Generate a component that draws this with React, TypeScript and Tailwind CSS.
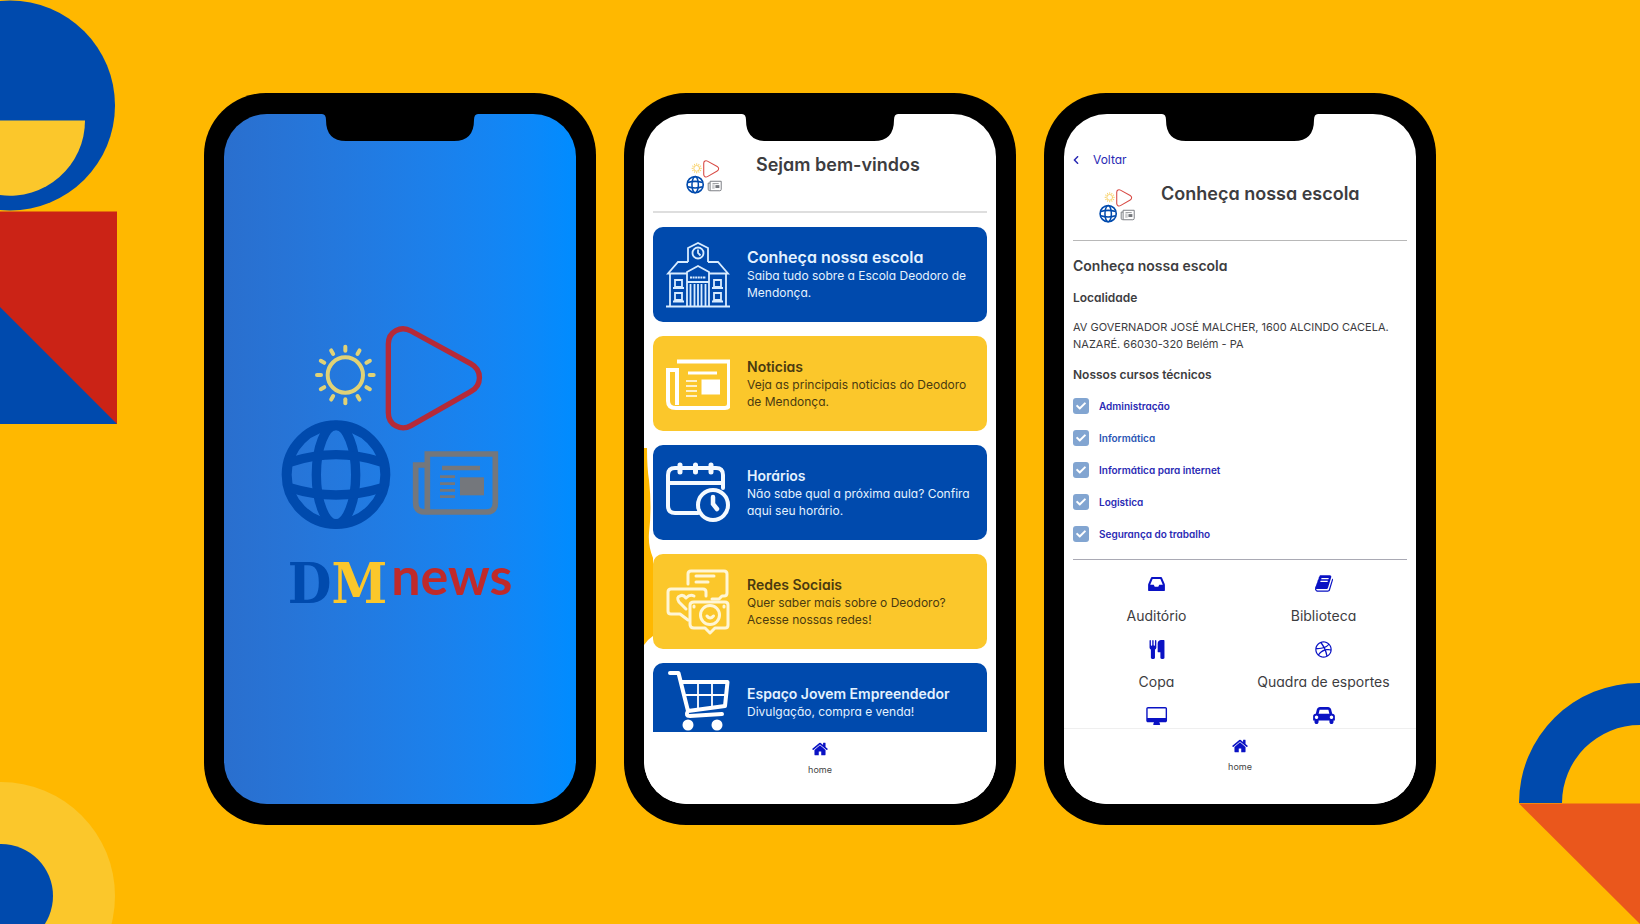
import React from "react";
import { FaCheck, FaChevronLeft, FaDribbble } from "react-icons/fa";

function LogoMark({ className, bold = true }: { className: string; bold?: boolean }) {
  const rays = [0, 30, 60, 90, 120, 150, 180, 210, 240, 270, 300, 330];
  return (
    <svg viewBox="60 70 660 620" className={className} fill="none" aria-hidden="true">
      <g stroke={bold ? "#e0d276" : "#f8d066"} strokeWidth={bold ? 12 : 18} strokeLinecap="round">
        <circle cx="256" cy="223" r="53" />
        {rays.map((a) => (
          <path key={a} d="M256 138v12" transform={`rotate(${a} 256 223)`} />
        ))}
      </g>
      <path
        d="M385 130C385 92 423 74 453 91L632 189C667 208 667 254 632 273L453 375C423 392 385 373 385 336Z"
        stroke={bold ? "#b52a38" : "#d84a44"}
        strokeWidth={bold ? 16 : 20}
      />
      <g stroke="#004aad">
        <circle cx="228" cy="522" r="148" strokeWidth="30" />
        <ellipse cx="228" cy="522" rx="59" ry="148" strokeWidth="28" />
        <path d="M92 484Q228 440 364 484M92 562Q228 604 364 562" strokeWidth="28" />
      </g>
      <g stroke="#74777c">
        <path d="M502 460H706V606Q706 634 680 634H502ZM502 493H467V606Q467 634 496 634" strokeWidth="17" />
        <path d="M546 502H660" strokeWidth="13" />
        <path d="M540 528H585M540 549H585M540 569H585M540 588H585" strokeWidth="8" />
        <rect x="600" y="530" width="72" height="54" fill="#74777c" stroke="none" />
      </g>
    </svg>
  );
}

function SchoolIcon() {
  return (
    <svg viewBox="0 0 64 66" className="w-16 shrink-0" fill="none" stroke="#d8ecff" strokeWidth="1.8" aria-hidden="true">
      <path d="M22 20V6L32 1L42 6V20" />
      <circle cx="32" cy="11" r="5.5" />
      <path d="M32 7.500V11L34.500 13.500M22 20H12L2 31.500H21M42 20H52L62 31.500H43M4 32V64M60 32V64M21 64V30L32 24L43 30V64M21 40H43M24.500 64V42M28.500 64V42M32 64V42M35.500 64V42M39.500 64V42M0 64.500H64" />
      <path d="M24 35.500H40" strokeWidth="2" strokeDasharray="2 .6" />
      <path d="M9 38H16V45H9ZM7 46H18M9 51H16V58H9ZM7 59.500H18M48 38H55V45H48ZM46 46H57M48 51H55V58H48ZM46 59.500H57" />
    </svg>
  );
}

function NewspaperIcon() {
  return (
    <svg viewBox="0 0 64 66" className="w-16 shrink-0" fill="none" stroke="#fff" strokeWidth="4" aria-hidden="true">
      <path d="M11 10.500H63V53Q63 57 59 57H10Q2 57 2 50V19H11V54" />
      <path d="M22 22H51" strokeWidth="3" />
      <path d="M20 30H31M20 35H31M20 40H31M20 45H31" strokeWidth="1.600" />
      <path d="M35.500 28.500H54V43.500H35.500Z" fill="#fff" stroke="none" />
    </svg>
  );
}

function ScheduleIcon() {
  return (
    <svg viewBox="0 0 64 66" className="w-16 shrink-0" fill="none" stroke="#f4faff" strokeWidth="4" strokeLinecap="round" aria-hidden="true">
      <path d="M32 53H9Q2 53 2 46V15Q2 8 9 8H50Q57 8 57 15V28M2 23H57" />
      <path d="M14 5V12M29.500 5V12M45 5V12" strokeWidth="5" />
      <circle cx="47" cy="45" r="15" />
      <path d="M47 37V44L51 49" strokeWidth="4.500" />
    </svg>
  );
}

function SocialIcon() {
  return (
    <svg viewBox="0 0 64 66" className="w-16 shrink-0" fill="none" stroke="#fff6d5" strokeWidth="3" strokeLinejoin="round" strokeLinecap="round" aria-hidden="true">
      <path d="M22 15V5Q22 2 25 2H58Q61 2 61 5V24Q61 27 58 27H56L53 30H46M30 7H48M30 13H42" />
      <path d="M40 27V23Q40 20 37 20H5Q2 20 2 23V42Q2 45 5 45H14L22 51" />
      <path d="M20 40L13 33Q10 28 14 27Q17 25 20 29Q24 25 28 27" />
      <path d="M28 33H59Q62 33 62 36V56Q62 59 59 59H49L44 64L39 59H28Q24 59 24 55V36Q24 33 28 33Z" />
      <circle cx="44" cy="46" r="9.500" />
      <path d="M41 47Q44 51 47.500 47M28 37V38M58 37V38" />
    </svg>
  );
}

function CartIcon() {
  return (
    <svg viewBox="0 0 64 66" className="w-16 shrink-0" fill="none" stroke="#fff" strokeWidth="4" strokeLinejoin="round" strokeLinecap="round" aria-hidden="true">
      <path d="M4 4H12.500L22 42L59 37L61.500 13H15M22 42Q19 47 24 47L56 45" />
      <path d="M18 26H60M32 14V40M46 14V38" strokeWidth="1.800" />
      <circle cx="22" cy="56" r="5.500" fill="#fff" stroke="none" />
      <circle cx="51" cy="56" r="5.500" fill="#fff" stroke="none" />
    </svg>
  );
}

type GlyphProps = { viewBox: string; d: string; className: string };

function Glyph({ viewBox, d, className }: GlyphProps) {
  return (
    <svg viewBox={viewBox} className={className} fill="currentColor" aria-hidden="true">
      <path d={d} />
    </svg>
  );
}

const HOME =
  "M1472 992v480q0 26-19 45t-45 19h-384v-384h-256v384h-384q-26 0-45-19t-19-45v-480q0-1 .5-3t.5-3l575-474 575 474q1 2 1 6zm223-69l-62 74q-8 9-21 11h-3q-13 0-21-7l-692-577-692 577q-12 8-24 7-13-2-21-11l-62-74q-8-10-7-23.5t11-21.5l719-599q32-26 76-26t76 26l244 204v-195q0-14 9-23t23-9h192q14 0 23 9t9 23v408l219 182q10 8 11 21.5t-7 23.5z";
const INBOX =
  "M1023 1088h316q-1-3-2.5-8t-2.5-8l-212-496h-708l-212 496q-1 2-2.5 8t-2.5 8h316l95 192h320zm513 30v482q0 26-19 45t-45 19h-1408q-26 0-45-19t-19-45v-482q0-62 25-123l238-552q10-25 36.5-42t52.5-17h832q26 0 52.5 17t36.5 42l238 552q25 61 25 123z";
const BOOK =
  "M1639 478q40 57 18 129l-275 906q-19 64-76.5 107.5t-122.5 43.5h-923q-77 0-148.5-53.5t-99.5-131.5q-24-67-2-127 0-4 3-27t4-37q1-8-3-21.5t-3-19.5q2-11 8-21t16.5-23.5 16.5-23.5q23-38 45-91.5t30-91.5q3-10 .5-30t-.5-28q3-11 17-28t17-23q21-36 42-92t25-90q1-9-2.5-32t.5-28q4-13 22-30.5t22-22.5q19-26 42.5-84.5t27.5-96.5q1-8-3-25.5t-2-26.5q2-8 9-18t18-23 17-21q8-12 16.5-30.5t15-35 16-36 19.5-32 26.5-23.5 36-11.5 47.5 5.5l-1 3q38-9 51-9h761q74 0 114 56t18 130l-274 906q-36 119-71.500 153.500t-128.500 34.500h-869q-27 0-38 15-11 16-1 43 24 70 144 70h923q29 0 56-15.500t35-41.500l300-987q7-22 5-57 38 15 59 43zm-1064 2q-4 13 2 22.500t20 9.500h608q13 0 25.500-9.500t16.500-22.500l21-64q4-13-2-22.500t-20-9.500h-608q-13 0-25.500 9.500t-16.500 22.500zm-83 256q-4 13 2 22.500t20 9.500h608q13 0 25.500-9.500t16.500-22.500l21-64q4-13-2-22.500t-20-9.500h-608q-13 0-25.500 9.500t-16.500 22.500z";
const CUTLERY =
  "M832 64v640q0 61-35.5 111t-92.5 70v779q0 52-38 90t-90 38h-128q-52 0-90-38t-38-90v-779q-57-20-92.5-70t-35.5-111v-640q0-26 19-45t45-19 45 19 19 45v416q0 26 19 45t45 19 45-19 19-45v-416q0-26 19-45t45-19 45 19 19 45v416q0 26 19 45t45 19 45-19 19-45v-416q0-26 19-45t45-19 45 19 19 45zm768 0v1600q0 52-38 90t-90 38h-128q-52 0-90-38t-38-90v-512h-224q-13 0-22.5-9.5t-9.5-22.5v-800q0-132 94-226t226-94h256q26 0 45 19t19 45z";
const DESKTOP =
  "M1728 992v-832q0-13-9.5-22.5t-22.5-9.5h-1600q-13 0-22.5 9.5t-9.5 22.5v832q0 13 9.5 22.5t22.5 9.5h1600q13 0 22.5-9.5t9.5-22.5zm128-832v1088q0 66-47 113t-113 47h-544q0 37 16 77.5t32 71 16 43.5q0 26-19 45t-45 19h-512q-26 0-45-19t-19-45q0-14 16-44t32-70 16-78h-544q-66 0-113-47t-47-113v-1088q0-66 47-113t113-47h1600q66 0 113 47t47 113z";
const CAR =
  "M480 1088q0-66-47-113t-113-47-113 47-47 113 47 113 113 47 113-47 47-113zm36-320h1016l-89-357q-2-8-14-17.5t-21-9.5h-768q-9 0-21 9.5t-14 17.5zm1372 320q0-66-47-113t-113-47-113 47-47 113 47 113 113 47 113-47 47-113zm160-96v384q0 14-9 23t-23 9h-96v128q0 80-56 136t-136 56-136-56-56-136v-128h-1024v128q0 80-56 136t-136 56-136-56-56-136v-128h-96q-14 0-23-9t-9-23v-384q0-93 65.5-158.5t158.5-65.5h28l105-419q23-94 104-157.5t179-63.5h768q98 0 179 63.5t104 157.5l105 419h28q93 0 158.5 65.5t65.5 158.5z";

function Phone({ children, screen }: { children: React.ReactNode; screen: string }) {
  return (
    <section className="relative aspect-[392/732] min-w-0 max-w-[392px] flex-1 rounded-[62px] bg-black px-5 py-[21px]">
      <div className={`relative flex h-full flex-col overflow-hidden rounded-[43px] ${screen}`}>{children}</div>
      <svg viewBox="0 0 156 30" className="absolute top-5 left-1/2 w-[156px] -translate-x-1/2" aria-hidden="true">
        <path d="M0 0H156V1Q152 1 152 7Q152 28 132 28H24Q4 28 4 7Q4 1 0 1Z" />
      </svg>
    </section>
  );
}

function HomeNav({ className }: { className: string }) {
  return (
    <nav className={`flex shrink-0 flex-col items-center bg-white ${className}`}>
      <a href="#home" className="flex flex-col items-center gap-2 text-[9px] leading-3 text-[#444]">
        <Glyph viewBox="64 253 1664 1283" d={HOME} className="h-3.5 w-4 text-[#0a12c4]" />
        home
      </a>
    </nav>
  );
}

const cards = [
  { title: "Conheça nossa escola", text: "Saiba tudo sobre a Escola Deodoro de Mendonça.", icon: <SchoolIcon />, box: "h-[95px] bg-[#004aad] text-[#e4f2ff]", size: "text-base" },
  { title: "Noticias", text: "Veja as principais noticias do Deodoro de Mendonça.", icon: <NewspaperIcon />, box: "h-[95px] bg-[#fbc72b] text-[#4a3a10]", size: "text-sm" },
  { title: "Horários", text: "Não sabe qual a próxima aula? Confira aqui seu horário.", icon: <ScheduleIcon />, box: "h-[95px] bg-[#004aad] text-[#e4f2ff]", size: "text-sm" },
  { title: "Redes Sociais", text: "Quer saber mais sobre o Deodoro? Acesse nossas redes!", icon: <SocialIcon />, box: "h-[95px] bg-[#fbc72b] text-[#4a3a10]", size: "text-sm" },
  { title: "Espaço Jovem Empreendedor", text: "Divulgação, compra e venda!", icon: <CartIcon />, box: "h-[78px] bg-[#004aad] text-[#e4f2ff]", size: "text-sm" },
];

const courses = [
  { name: "Administração", color: "text-[#2a2ab4]" },
  { name: "Informática", color: "text-[#2a55b4]" },
  { name: "Informática para internet", color: "text-[#2a2ab4]" },
  { name: "Logistica", color: "text-[#2a2ab4]" },
  { name: "Segurança do trabalho", color: "text-[#2a2ab4]" },
];

const places = [
  { name: "Auditório", icon: <Glyph viewBox="0 384 1536 1280" d={INBOX} className="h-3.5 w-[17px]" /> },
  { name: "Biblioteca", icon: <Glyph viewBox="0 128 1664 1536" d={BOOK} className="h-[17px] w-[18px]" /> },
  { name: "Copa", icon: <Glyph viewBox="192 0 1408 1792" d={CUTLERY} className="h-[19px] w-4" /> },
  { name: "Quadra de esportes", icon: <FaDribbble className="size-[17px]" aria-hidden="true" /> },
  { name: "", icon: <Glyph viewBox="-64 0 1984 1664" d={DESKTOP} className="h-[18px] w-[22px]" /> },
  { name: "", icon: <Glyph viewBox="0 128 2048 1600" d={CAR} className="h-[17px] w-[22px]" /> },
];

function Decorations() {
  return (
    <>
      <svg width="118" height="425" className="absolute top-0 left-0" aria-hidden="true">
        <circle cx="10" cy="105.500" r="105" fill="#004aad" />
        <path d="M0 120.500H85A75 75 0 0 1 0 195Z" fill="#fbc72b" />
        <path d="M0 211.500H117V424H0Z" fill="#cb2316" />
        <path d="M0 307L117 424H0Z" fill="#004aad" />
      </svg>
      <svg width="116" height="143" className="absolute bottom-0 left-0" aria-hidden="true">
        <circle cx="1" cy="115" r="114" fill="#fbc72b" />
        <circle cx="1" cy="115" r="52" fill="#004aad" />
      </svg>
      <svg width="121" height="242" className="absolute right-0 bottom-0" aria-hidden="true">
        <path d="M0 121A120 120 0 0 1 121 1V43A78 78 0 0 0 43 121Z" fill="#004aad" />
        <path d="M0 121.500H121V242Z" fill="#ea571c" />
      </svg>
    </>
  );
}

export default function App() {
  return (
    <main className="relative flex min-h-screen items-start justify-center gap-7 overflow-hidden bg-[#ffb800] px-4 pt-[93px] pb-24 font-[Inter,sans-serif] text-[#3d3d3f] [font-feature-settings:'cv11']">
      <Decorations />

      <Phone screen="bg-linear-to-r from-[#2a6fce] to-[#008cff] items-center">
        <LogoMark className="mt-[210px] mr-5 w-[220px]" />
        <h1 className="mt-2 flex items-center font-bold">
          <span className="font-['DejaVu_Serif_Condensed','DejaVu_Serif',serif] text-[56px] leading-[72px] text-[#004aad]">D</span>
          <span className="font-['DejaVu_Serif_Condensed','DejaVu_Serif',serif] text-[56px] leading-[72px] text-[#fbc72b]">M</span>
          <span className="mb-4 ml-1 font-[Lato,sans-serif] text-[52px] leading-[72px] text-[#c02a2a]">news</span>
        </h1>
      </Phone>

      <Phone screen="bg-white">
        <svg viewBox="0 0 9 197" className="absolute top-[334px] left-0 w-[9px]" aria-hidden="true">
          <path d="M0 0H3Q3 20 5 32Q8 60 5 85Q4 98 9 110V188L4 192L0 197Z" fill="#ffb800" />
        </svg>
        <div className="relative flex min-h-0 flex-1 flex-col overflow-hidden px-[9px]">
          <header className="flex h-[99px] shrink-0 items-start border-b-2 border-[#dedede] pt-[38px] pl-[33px]">
            <LogoMark bold={false} className="mt-2 w-9" />
            <h2 className="ml-[34px] text-lg leading-[26px] font-semibold">Sejam bem-vindos</h2>
          </header>
          <div className="mt-3.5 flex flex-col gap-3.5">
            {cards.map((c) => (
              <a key={c.title} href="#secao" className={`flex shrink-0 items-center gap-[17px] rounded-[10px] px-[13px] ${c.box}`}>
                {c.icon}
                <span className="flex min-w-0 flex-col">
                  <strong className={`leading-[19px] font-semibold ${c.size}`}>{c.title}</strong>
                  <span className="text-xs leading-[17px]">{c.text}</span>
                </span>
              </a>
            ))}
          </div>
        </div>
        <HomeNav className="h-[72px] pt-2.5" />
      </Phone>

      <Phone screen="bg-white">
        <div className="flex min-h-0 flex-1 flex-col overflow-hidden px-[9px] pt-9">
          <a href="#voltar" className="flex items-center gap-3.5 text-xs leading-5 text-[#2a2ab4]">
            <FaChevronLeft className="h-3 w-1.5" aria-hidden="true" />
            Voltar
          </a>
          <header className="flex h-[71px] shrink-0 items-start border-b border-[#b8b8b8] pt-[11px] pl-[26px]">
            <LogoMark bold={false} className="mt-2 w-9" />
            <h2 className="ml-[26px] text-lg leading-[26px] font-semibold whitespace-nowrap">Conheça nossa escola</h2>
          </header>
          <h3 className="mt-3.5 text-sm leading-[22px] font-semibold">Conheça nossa escola</h3>
          <h4 className="mt-2.5 text-xs leading-[22px] font-semibold">Localidade</h4>
          <p className="mt-2.5 text-[11px] leading-[17px]">
            AV GOVERNADOR JOSÉ MALCHER, 1600 ALCINDO CACELA. NAZARÉ. 66030-320 Belém - PA
          </p>
          <h4 className="mt-[11px] text-xs leading-[22px] font-semibold">Nossos cursos técnicos</h4>
          <ul className="mt-3 flex flex-col gap-4 border-b border-[#a9a9b4] pb-[17px]">
            {courses.map((c) => (
              <li key={c.name}>
                <label className={`flex items-center gap-2.5 text-[10px] leading-4 font-semibold ${c.color}`}>
                  <span className="grid place-items-center">
                    <input type="checkbox" defaultChecked className="col-start-1 row-start-1 size-4 appearance-none rounded-[3px] bg-[#82a5d1]" />
                    <FaCheck className="pointer-events-none col-start-1 row-start-1 size-2.5 text-white" aria-hidden="true" />
                  </span>
                  {c.name}
                </label>
              </li>
            ))}
          </ul>
          <ul className="mt-3.5 grid shrink-0 grid-cols-2 gap-y-[13px]">
            {places.map((p, i) => (
              <li key={i} className="flex flex-col items-center gap-3 text-sm leading-[22px]">
                <span className="flex h-[19px] items-center text-[#0a12c4]">{p.icon}</span>
                {p.name}
              </li>
            ))}
          </ul>
        </div>
        <HomeNav className="h-[76px] border-t border-[#efefef] pt-2.5" />
      </Phone>
    </main>
  );
}
